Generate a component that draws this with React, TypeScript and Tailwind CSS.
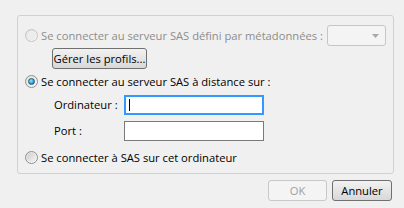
import React from "react";

const Radio = ({ checked, disabled }: { checked?: boolean; disabled?: boolean }) => (
	<span
		className={`flex h-[13px] w-[13px] shrink-0 items-center justify-center rounded-full border ${
			disabled ? "border-[#c4c4c4]" : "border-[#8e8f8f]"
		} bg-gradient-to-br from-[#e0e0e0] to-[#fbfbfb]`}
	>
		{checked ? (
			<span className="h-[7px] w-[7px] rounded-full border border-[#1d5f7a] bg-[radial-gradient(circle_at_40%_35%,#9fe3ff,#2a9bd3_60%,#10678f)]" />
		) : (
			<span
				className={`h-[9px] w-[9px] rounded-full ${
					disabled ? "bg-[#ececec]" : "bg-gradient-to-br from-[#cfcfcf] to-[#f4f4f4]"
				}`}
			/>
		)}
	</span>
);

export default function App() {
	return (
		<div
			className="h-[208px] w-[404px] whitespace-nowrap bg-[#f0f0f0] pt-[15px] text-[11.2px] leading-none text-black"
			style={{ fontFamily: '"Open Sans", "Noto Sans", sans-serif' }}
		>
			{/* ---------- Panel ---------- */}
			<div className="ml-[17px] h-[159px] w-[377px] rounded-[3px] border border-[#d0d0d0] pl-[7px] pt-[9px]">
				<div className="flex h-[21px] items-center">
					<Radio disabled />
					<span className="ml-[3px] text-[#8d8d8d]">
						Se connecter au serveur SAS défini par métadonnées :
					</span>
					<div className="ml-auto mr-[7px] flex h-[21px] w-[59px] items-center justify-end rounded-[3px] border border-[#c6c6c6] bg-[#f4f4f4] pr-[6px]">
						<svg width="7" height="4" viewBox="0 0 7 4">
							<path d="M0 0h7L3.5 4z" fill="#a8a8a8" />
						</svg>
					</div>
				</div>

				<button className="ml-[27px] mt-[2px] flex h-[21px] w-[95px] items-center justify-center rounded-[3px] border border-[#707070] bg-gradient-to-b from-[#f2f2f2] to-[#d8d8d8]">
					Gérer les profils...
				</button>

				<div className="mt-[2px] flex h-[21px] items-center">
					<Radio checked />
					<span className="ml-[3px]">Se connecter au serveur SAS à distance sur :</span>
				</div>

				<div className="ml-[29px] mt-[3px] flex flex-col gap-[6px]">
					<div className="flex items-center">
						<span className="w-[70px]">Ordinateur :</span>
						<div className="flex h-[20px] w-[140px] items-center border-2 border-[#3399ff] bg-white pl-[3px]">
							<span className="h-[12px] w-px bg-black" />
						</div>
					</div>
					<div className="flex items-center">
						<span className="w-[70px]">Port :</span>
						<div className="h-[20px] w-[140px] border border-[#7a7a7a] bg-white" />
					</div>
				</div>

				<div className="mt-[6px] flex h-[21px] items-center">
					<Radio />
					<span className="ml-[3px]">Se connecter à SAS sur cet ordinateur</span>
				</div>
			</div>

			{/* ---------- Buttons ---------- */}
			<div className="mr-[12px] mt-[6px] flex justify-end gap-[5px]">
				<button className="flex h-[21px] w-[59px] items-center justify-center rounded-[3px] border border-[#c8c8c8] bg-[#f4f4f4] text-[#a0a0a0]">
					OK
				</button>
				<button className="flex h-[21px] w-[60px] items-center justify-center rounded-[3px] border border-[#707070] bg-gradient-to-b from-[#f2f2f2] to-[#d8d8d8]">
					Annuler
				</button>
			</div>
		</div>
	);
}
